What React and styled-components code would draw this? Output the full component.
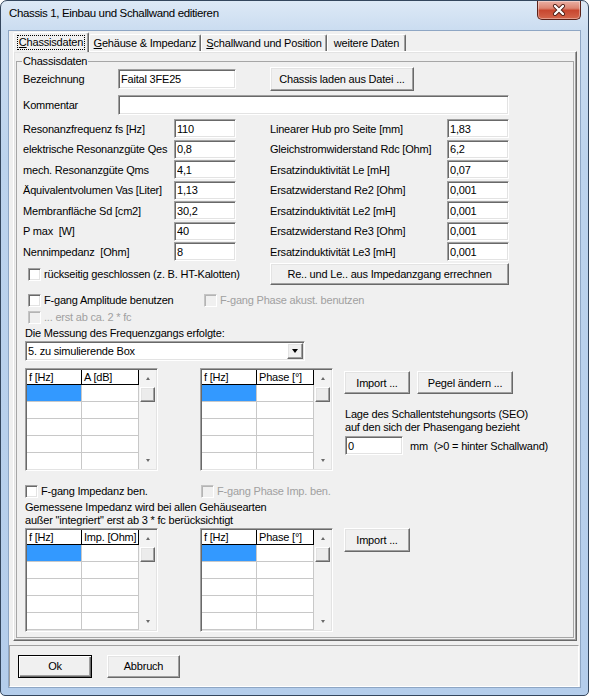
import { Fragment } from "react";
import styled, { createGlobalStyle, css } from "styled-components";

const GlobalStyle = createGlobalStyle`
  html, body {
    margin: 0;
    padding: 0;
    background: #ffffff;
  }
  body {
    font-family: "Liberation Sans", Arial, sans-serif;
    font-size: 11px;
    letter-spacing: -0.2px;
    color: #000;
  }
  * {
    box-sizing: border-box;
  }
`;

const sunken = css`
  border: 1px solid;
  border-color: #a0a0a0 #ffffff #ffffff #a0a0a0;
  box-shadow: inset 1px 1px #696969, inset -1px -1px #e3e3e3;
`;

const raised = css`
  border: 1px solid;
  border-color: #ffffff #696969 #696969 #ffffff;
  box-shadow: inset -1px -1px #a0a0a0, inset 1px 1px #e3e3e3;
`;

const Window = styled.div`
  width: 589px;
  height: 696px;
  display: flex;
  flex-direction: column;
  border: 1px solid #34465d;
  border-radius: 7px 7px 5px 5px;
  background: linear-gradient(180deg, #dde9f6 0px, #cadcf0 30px, #bcd3ed 160px, #b4cdeb 100%);
  overflow: hidden;
`;

const TitleBar = styled.div`
  height: 29px;
  flex: none;
  display: flex;
  align-items: flex-start;
  padding-left: 8px;
`;

const TitleText = styled.span`
  font-family: "Liberation Sans", Arial, sans-serif;
  font-size: 11.5px;
  letter-spacing: -0.35px;
  line-height: 24px;
`;

const CloseButton = styled.div`
  margin-left: auto;
  margin-right: 7px;
  width: 44px;
  height: 19px;
  border: 1px solid #5b2219;
  border-top: none;
  border-radius: 0 0 5px 5px;
  background: linear-gradient(180deg, #eab0a4 0%, #dc8572 40%, #c8472f 52%, #d4664c 100%);
  box-shadow: inset 0 0 0 1px rgba(255, 255, 255, 0.35);
  display: flex;
  align-items: center;
  justify-content: center;
`;

const Client = styled.div`
  flex: 1;
  margin: 0 7px 7px 7px;
  border: 1px solid #8ea6c4;
  background: #f0f0f0;
  display: flex;
  flex-direction: column;
`;

const TabStrip = styled.div`
  height: 19px;
  margin: 1px 3px 0 4px;
  display: flex;
  align-items: flex-end;
  position: relative;
  z-index: 1;
  flex: none;
`;

const Tab = styled.div`
  width: ${(p) => p.$w}px;
  height: ${(p) => (p.$active ? 20 : 17)}px;
  margin-bottom: ${(p) => (p.$active ? -1 : 0)}px;
  border: 1px solid;
  border-bottom: none;
  border-color: #ffffff #696969 transparent #ffffff;
  border-radius: 2px 2px 0 0;
  box-shadow: inset -1px 0 #a0a0a0;
  background: #f0f0f0;
  display: flex;
  align-items: ${(p) => (p.$active ? "flex-start" : "center")};
  justify-content: center;
  padding-top: ${(p) => (p.$active ? 2 : 0)}px;
  white-space: nowrap;
  u {
    text-decoration: underline;
  }
`;

const FocusText = styled.span`
  border: 1px dotted #000;
  padding: 0 1px;
  line-height: 13px;
`;

const TabPanel = styled.div`
  height: 590px;
  flex: none;
  margin: 0 3px 0 4px;
  ${raised}
  padding: 3px 2px 2px 2px;
  display: flex;
  flex-direction: column;
`;

const GroupBox = styled.fieldset`
  flex: 1;
  min-width: 0;
  margin: 0;
  padding: 0 0 0 6px;
  border: 1px solid #a6a6a6;
  display: flex;
  flex-direction: column;
`;

const Legend = styled.legend`
  padding: 0 1px;
  margin-left: -1px;
  line-height: 12px;
`;

const Row = styled.div`
  display: flex;
  align-items: center;
  height: ${(p) => p.$h}px;
  margin-top: ${(p) => p.$mt || 0}px;
  margin-left: ${(p) => p.$ml || 0}px;
  flex: none;
`;

const Label = styled.span`
  width: ${(p) => (p.$w ? `${p.$w}px` : "auto")};
  margin-left: ${(p) => p.$ml || 0}px;
  flex: none;
  white-space: pre;
  color: ${(p) => (p.$disabled ? "#a0a0a0" : "#000")};
`;

const TextBox = styled.input`
  width: ${(p) => p.$w}px;
  height: ${(p) => p.$h || 19}px;
  ${sunken}
  background: #ffffff;
  font: inherit;
  letter-spacing: inherit;
  color: #000;
  padding: 0 0 0 2px;
  margin: 0;
  outline: none;
  flex: none;
`;

const Button = styled.button`
  width: ${(p) => p.$w}px;
  height: ${(p) => p.$h || 23}px;
  margin-left: ${(p) => p.$ml || 0}px;
  ${raised}
  background: #f0f0f0;
  font: inherit;
  letter-spacing: inherit;
  color: #000;
  padding: 0;
  flex: none;
  ${(p) =>
    p.$default &&
    css`
      border: 1px solid #000;
      box-shadow: inset 1px 1px #ffffff, inset -1px -1px #696969, inset -2px -2px #a0a0a0;
    `}
`;

const ParamGrid = styled.div`
  display: grid;
  grid-template-columns: 151px 62px 34px 177px 62px;
  grid-auto-rows: 19px;
  row-gap: 1.5px;
  align-items: center;
  margin-top: 4px;
  flex: none;
`;

const CheckItem = styled.label`
  display: flex;
  align-items: center;
  gap: 3px;
  width: ${(p) => (p.$w ? `${p.$w}px` : "auto")};
  margin-left: ${(p) => p.$ml || 0}px;
  flex: none;
`;

const CheckBox = styled.span`
  width: 13px;
  height: 13px;
  flex: none;
  border: 1px solid;
  ${(p) =>
    p.$disabled
      ? css`
          border-color: #c4c4c4 #ffffff #ffffff #c4c4c4;
          box-shadow: inset 1px 1px #b4b4b4;
          background: #f0f0f0;
        `
      : css`
          border-color: #a0a0a0 #ffffff #ffffff #a0a0a0;
          box-shadow: inset 1px 1px #696969, inset -1px -1px #e3e3e3;
          background: #ffffff;
        `}
`;

const TextLine = styled.div`
  line-height: 13px;
  margin-top: ${(p) => p.$mt || 0}px;
  padding-left: ${(p) => p.$pl || 0}px;
  white-space: pre;
  flex: none;
`;

const Combo = styled.div`
  width: 280px;
  height: 20px;
  margin: 1px 0 0 2px;
  ${sunken}
  background: #ffffff;
  display: flex;
  align-items: center;
  flex: none;
`;

const ComboText = styled.span`
  flex: 1;
  padding-left: 2px;
`;

const ComboButton = styled.span`
  width: 16px;
  height: 16px;
  margin-right: 1px;
  ${raised}
  background: #f0f0f0;
  display: flex;
  align-items: center;
  justify-content: center;
  &::after {
    content: "";
    border-left: 3.5px solid transparent;
    border-right: 3.5px solid transparent;
    border-top: 4px solid #000;
  }
`;

const TableSection = styled.div`
  display: flex;
  align-items: flex-start;
  margin: ${(p) => p.$mt}px 0 0 2px;
  flex: none;
`;

const GridFrame = styled.div`
  width: 133px;
  height: ${(p) => p.$h}px;
  margin-left: ${(p) => p.$ml || 0}px;
  ${sunken}
  padding: 1px;
  background: #ffffff;
  display: flex;
  overflow: hidden;
  flex: none;
`;

const Cells = styled.div`
  width: 112px;
  flex: none;
  display: grid;
  grid-template-columns: 55px 57px;
  grid-template-rows: 15px;
  grid-auto-rows: 17px;
  align-content: start;
  overflow: hidden;
`;

const HeadCell = styled.div`
  border-right: 1px solid #000;
  border-bottom: 1px solid #000;
  padding-left: 2px;
  line-height: 14px;
  white-space: nowrap;
  overflow: hidden;
`;

const Cell = styled.div`
  border-right: 1px solid #c8c8c8;
  border-bottom: 1px solid #c8c8c8;
  background: ${(p) => (p.$selected ? "#3399ff" : "#ffffff")};
`;

const ScrollBar = styled.div`
  width: 17px;
  flex: none;
  background: #f3f3f3;
  display: flex;
  flex-direction: column;
`;

const ScrollArrow = styled.div`
  height: 17px;
  flex: none;
  display: flex;
  align-items: center;
  justify-content: center;
  &::after {
    content: "";
    border-left: 2.5px solid transparent;
    border-right: 2.5px solid transparent;
    ${(p) =>
      p.$down
        ? css`
            border-top: 3px solid #6a6a6a;
          `
        : css`
            border-bottom: 3px solid #6a6a6a;
          `}
  }
`;

const Thumb = styled.div`
  height: 15px;
  margin: 0 1px;
  flex: none;
  ${raised}
  background: #ececec;
`;

const ScrollTrack = styled.div`
  flex: 1;
`;

const SideColumn = styled.div`
  margin-left: 11px;
  display: flex;
  flex-direction: column;
`;

const BottomBar = styled.div`
  flex: 1;
  margin: 4px 1px 0 0;
  border: 1px solid;
  border-color: #a0a0a0 #ffffff #ffffff #a0a0a0;
  display: flex;
  align-items: center;
  gap: 15px;
  padding-left: 8px;
`;

const leftParams = [
  ["Resonanzfrequenz fs [Hz]", "110"],
  ["elektrische Resonanzgüte Qes", "0,8"],
  ["mech. Resonanzgüte Qms", "4,1"],
  ["Äquivalentvolumen Vas [Liter]", "1,13"],
  ["Membranfläche Sd [cm2]", "30,2"],
  ["P max  [W]", "40"],
  ["Nennimpedanz  [Ohm]", "8"],
];

const rightParams = [
  ["Linearer Hub pro Seite [mm]", "1,83"],
  ["Gleichstromwiderstand Rdc [Ohm]", "6,2"],
  ["Ersatzinduktivität Le [mH]", "0,07"],
  ["Ersatzwiderstand Re2 [Ohm]", "0,001"],
  ["Ersatzinduktivität Le2 [mH]", "0,001"],
  ["Ersatzwiderstand Re3 [Ohm]", "0,001"],
  ["Ersatzinduktivität Le3 [mH]", "0,001"],
];

const DataGrid = ({ headers, height, ml }) => (
  <GridFrame $h={height} $ml={ml}>
    <Cells>
      {headers.map((h) => (
        <HeadCell key={h}>{h}</HeadCell>
      ))}
      {Array.from({ length: 12 }).map((_, i) => (
        <Cell key={i} $selected={i === 0} />
      ))}
    </Cells>
    <ScrollBar>
      <ScrollArrow />
      <Thumb />
      <ScrollTrack />
      <ScrollArrow $down />
    </ScrollBar>
  </GridFrame>
);

const CloseIcon = () => (
  <svg width="14" height="12" viewBox="0 0 14 12">
    <path d="M3 2 L11 10 M11 2 L3 10" stroke="#4a1a12" strokeWidth="4" strokeLinecap="round" />
    <path d="M3 2 L11 10 M11 2 L3 10" stroke="#ffffff" strokeWidth="2.4" strokeLinecap="round" />
  </svg>
);

const App = () => {
  return (
    <>
      <GlobalStyle />
      <Window>
        <TitleBar>
          <TitleText>Chassis 1, Einbau und Schallwand editieren</TitleText>
          <CloseButton>
            <CloseIcon />
          </CloseButton>
        </TitleBar>
        <Client>
          <TabStrip>
            <Tab $active $w={76}>
              <FocusText>
                <u>C</u>hassisdaten
              </FocusText>
            </Tab>
            <Tab $w={112}>
              <span>
                <u>G</u>ehäuse &amp; Impedanz
              </span>
            </Tab>
            <Tab $w={126}>
              <span>
                <u>S</u>challwand und Position
              </span>
            </Tab>
            <Tab $w={79}>
              <span>weitere Daten</span>
            </Tab>
          </TabStrip>
          <TabPanel>
            <GroupBox>
              <Legend>Chassisdaten</Legend>
              <Row $h={24}>
                <Label $w={95}>Bezeichnung</Label>
                <TextBox $w={118} $h={20} readOnly defaultValue="Faital 3FE25" />
                <Button $w={144} $h={24} $ml={34}>
                  Chassis laden aus Datei ...
                </Button>
              </Row>
              <Row $h={20} $mt={4}>
                <Label $w={95}>Kommentar</Label>
                <TextBox $w={391} $h={20} readOnly defaultValue="" />
              </Row>
              <ParamGrid>
                {leftParams.map(([label, value], i) => (
                  <Fragment key={label}>
                    <Label>{label}</Label>
                    <TextBox $w={62} readOnly defaultValue={value} />
                    <span />
                    <Label>{rightParams[i][0]}</Label>
                    <TextBox $w={62} readOnly defaultValue={rightParams[i][1]} />
                  </Fragment>
                ))}
              </ParamGrid>
              <Row $h={22} $mt={2}>
                <CheckItem $w={242} $ml={5}>
                  <CheckBox />
                  <Label>rückseitig geschlossen (z. B. HT-Kalotten)</Label>
                </CheckItem>
                <Button $w={239} $h={22}>
                  Re.. und Le.. aus Impedanzgang errechnen
                </Button>
              </Row>
              <Row $h={14} $mt={8}>
                <CheckItem $w={176} $ml={5}>
                  <CheckBox />
                  <Label>F-gang Amplitude benutzen</Label>
                </CheckItem>
                <CheckItem>
                  <CheckBox $disabled />
                  <Label $disabled>F-gang Phase akust. benutzen</Label>
                </CheckItem>
              </Row>
              <Row $h={14} $mt={3}>
                <CheckItem $ml={5}>
                  <CheckBox $disabled />
                  <Label $disabled>... erst ab ca. 2 * fc</Label>
                </CheckItem>
              </Row>
              <TextLine $mt={3} $pl={2}>
                Die Messung des Frequenzgangs erfolgte:
              </TextLine>
              <Combo>
                <ComboText>5. zu simulierende Box</ComboText>
                <ComboButton />
              </Combo>
              <TableSection $mt={7}>
                <DataGrid headers={["f [Hz]", "A [dB]"]} height={103} />
                <DataGrid headers={["f [Hz]", "Phase [°]"]} height={103} ml={42} />
                <SideColumn>
                  <Row $h={23} $mt={3}>
                    <Button $w={66}>Import ...</Button>
                    <Button $w={96} $ml={7}>
                      Pegel ändern ...
                    </Button>
                  </Row>
                  <TextLine $mt={14} $pl={1}>
                    Lage des Schallentstehungsorts (SEO)
                  </TextLine>
                  <TextLine $pl={1}>auf den sich der Phasengang bezieht</TextLine>
                  <Row $h={19} $mt={2} $ml={1}>
                    <TextBox $w={58} readOnly defaultValue="0" />
                    <Label $ml={7}>mm  (&gt;0 = hinter Schallwand)</Label>
                  </Row>
                </SideColumn>
              </TableSection>
              <Row $h={14} $mt={13} $ml={2}>
                <CheckItem $w={176}>
                  <CheckBox />
                  <Label>F-gang Impedanz ben.</Label>
                </CheckItem>
                <CheckItem>
                  <CheckBox $disabled />
                  <Label $disabled>F-gang Phase Imp. ben.</Label>
                </CheckItem>
              </Row>
              <TextLine $mt={3} $pl={2}>
                Gemessene Impedanz wird bei allen Gehäusearten
              </TextLine>
              <TextLine $pl={2}>außer "integriert" erst ab 3 * fc berücksichtigt</TextLine>
              <TableSection $mt={1}>
                <DataGrid headers={["f [Hz]", "Imp. [Ohm]"]} height={104} />
                <DataGrid headers={["f [Hz]", "Phase [°]"]} height={104} ml={42} />
                <SideColumn>
                  <Button $w={66} $h={24}>
                    Import ...
                  </Button>
                </SideColumn>
              </TableSection>
            </GroupBox>
          </TabPanel>
          <BottomBar>
            <Button $w={74} $default>
              Ok
            </Button>
            <Button $w={73}>Abbruch</Button>
          </BottomBar>
        </Client>
      </Window>
    </>
  );
};

export default App;
